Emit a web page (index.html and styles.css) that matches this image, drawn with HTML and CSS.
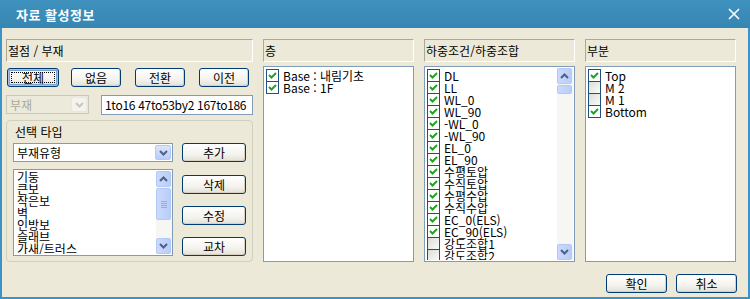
FILE: index.html
```html
<!DOCTYPE html>
<html lang="ko">
<head>
  <meta charset="UTF-8">
  <title>자료 활성정보</title>
  <link rel="stylesheet" href="styles.css">
</head>
<body>
  <div class="window">
    <div class="titlebar">
      <span class="title">자료 활성정보</span>
      <svg class="close" width="12" height="12" viewBox="0 0 12 12">
        <path d="M1 1 L11 11 M11 1 L1 11" stroke="#fff" stroke-width="1.6" fill="none"/>
      </svg>
    </div>
    <div class="frame">
      <div class="columns">
        <!-- 절점 / 부재 -->
        <section class="col">
          <div class="caption">절점 / 부재</div>
          <div class="btn-row">
            <button class="btn default">전체</button>
            <button class="btn">없음</button>
            <button class="btn">전환</button>
            <button class="btn">이전</button>
          </div>
          <div class="filter-row">
            <div class="combo disabled">
              <span class="combo-text">부재</span>
              <span class="drop">
                <svg width="9" height="6" viewBox="0 0 9 6"><path d="M1 1 L4.5 4.5 L8 1" stroke="#c9c7ba" stroke-width="2" fill="none"/></svg>
              </span>
            </div>
            <div class="textbox">1to16 47to53by2 167to186</div>
          </div>
          <div class="group">
            <div class="group-label">선택 타입</div>
            <div class="group-grid">
              <div class="combo">
                <span class="combo-text">부재유형</span>
                <span class="drop">
                  <svg width="9" height="6" viewBox="0 0 9 6"><path d="M1 1 L4.5 4.5 L8 1" stroke="#4d6185" stroke-width="2" fill="none"/></svg>
                </span>
              </div>
              <button class="btn">추가</button>
              <div class="listbox">
                <div class="items plain">
                  <div class="item">기둥</div>
                  <div class="item">큰보</div>
                  <div class="item">작은보</div>
                  <div class="item">벽</div>
                  <div class="item">인방보</div>
                  <div class="item">슬래브</div>
                  <div class="item">가새/트러스</div>
                </div>
                <div class="scrollbar">
                  <span class="sb-btn"><svg width="9" height="6" viewBox="0 0 9 6"><path d="M1 5 L4.5 1.5 L8 5" stroke="#4d6185" stroke-width="2" fill="none"/></svg></span>
                  <span class="sb-thumb tall"><i></i><i></i><i></i><i></i></span>
                  <span class="sb-track"></span>
                  <span class="sb-btn"><svg width="9" height="6" viewBox="0 0 9 6"><path d="M1 1 L4.5 4.5 L8 1" stroke="#4d6185" stroke-width="2" fill="none"/></svg></span>
                </div>
              </div>
              <div class="btn-stack">
                <button class="btn">삭제</button>
                <button class="btn">수정</button>
                <button class="btn">교차</button>
              </div>
            </div>
          </div>
        </section>

        <!-- 층 -->
        <section class="col">
          <div class="caption">층</div>
          <div class="list">
            <div class="items">
              <div class="check-item"><span class="box on"></span>Base : 내림기초</div>
              <div class="check-item"><span class="box on"></span>Base : 1F</div>
            </div>
          </div>
        </section>

        <!-- 하중조건/하중조합 -->
        <section class="col">
          <div class="caption">하중조건/하중조합</div>
          <div class="list">
            <div class="items">
              <div class="check-item"><span class="box on"></span>DL</div>
              <div class="check-item"><span class="box on"></span>LL</div>
              <div class="check-item"><span class="box on"></span>WL_0</div>
              <div class="check-item"><span class="box on"></span>WL_90</div>
              <div class="check-item"><span class="box on"></span>-WL_0</div>
              <div class="check-item"><span class="box on"></span>-WL_90</div>
              <div class="check-item"><span class="box on"></span>EL_0</div>
              <div class="check-item"><span class="box on"></span>EL_90</div>
              <div class="check-item"><span class="box on"></span>수평토압</div>
              <div class="check-item"><span class="box on"></span>수직토압</div>
              <div class="check-item"><span class="box on"></span>수평수압</div>
              <div class="check-item"><span class="box on"></span>수직수압</div>
              <div class="check-item"><span class="box on"></span>EC_0(ELS)</div>
              <div class="check-item"><span class="box on"></span>EC_90(ELS)</div>
              <div class="check-item"><span class="box"></span>강도조합1</div>
              <div class="check-item"><span class="box"></span>강도조합2</div>
              <div class="check-item"><span class="box"></span>강도조합3</div>
            </div>
            <div class="scrollbar">
              <span class="sb-btn"><svg width="9" height="6" viewBox="0 0 9 6"><path d="M1 5 L4.5 1.5 L8 5" stroke="#4d6185" stroke-width="2" fill="none"/></svg></span>
              <span class="sb-thumb"></span>
              <span class="sb-track"></span>
              <span class="sb-btn"><svg width="9" height="6" viewBox="0 0 9 6"><path d="M1 1 L4.5 4.5 L8 1" stroke="#4d6185" stroke-width="2" fill="none"/></svg></span>
            </div>
          </div>
        </section>

        <!-- 부분 -->
        <section class="col">
          <div class="caption">부분</div>
          <div class="list">
            <div class="items">
              <div class="check-item"><span class="box on"></span>Top</div>
              <div class="check-item"><span class="box"></span>M 2</div>
              <div class="check-item"><span class="box"></span>M 1</div>
              <div class="check-item"><span class="box on"></span>Bottom</div>
            </div>
          </div>
        </section>
      </div>

      <div class="footer">
        <button class="btn wide">확인</button>
        <button class="btn wide">취소</button>
      </div>
    </div>
  </div>
</body>
</html>
```

FILE: styles.css
```css
* { box-sizing: border-box; }
body {
  margin: 0;
  font-family: "Noto Sans CJK KR", "Noto Sans", sans-serif;
  font-size: 12px;
  color: #000;
}
.window {
  width: 750px;
  height: 299px;
  display: flex;
  flex-direction: column;
  background: #ece9d8;
}
.titlebar {
  height: 28px;
  display: flex;
  align-items: center;
  justify-content: space-between;
  padding: 0 10px 0 16px;
  background: linear-gradient(#3f91be, #3686b3);
  color: #fff;
  font-size: 13px;
  font-weight: bold;
  letter-spacing: 0.5px;
}
.frame {
  flex: 1;
  border: 2px solid #3b93c9;
  border-top: 0;
  padding: 11px 12px 0 4px;
}
.columns {
  display: grid;
  grid-template-columns: 247px 151px 151px 151px;
  column-gap: 10px;
}
.col { display: flex; flex-direction: column; }
.caption {
  height: 23px;
  line-height: 21px;
  padding-left: 1px;
  border: 1px solid;
  border-color: #aca899 #fff #fff #aca899;
}

/* buttons */
.btn {
  position: relative;
  height: 19px;
  padding: 0;
  font: inherit;
  line-height: 17px;
  color: #000;
  border: 1px solid #003c74;
  border-radius: 3px;
  background: linear-gradient(#ffffff, #f4f3ee 60%, #e3e1d6);
  box-shadow: inset -1px -1px 0 #d6d0c5;
}
.btn.default {
  box-shadow: inset 0 0 0 1px #a4c0ee, inset 0 0 0 2px #7da2ce;
}
.btn.default::after {
  content: "";
  position: absolute;
  left: 3px; top: 3px; right: 3px; bottom: 3px;
  border: 1px dotted #000;
}
.btn-row {
  display: flex;
  gap: 14px;
  margin-top: 6px;
  padding-left: 1px;
}
.btn-row .btn { width: 50px; }
.btn-row .btn.default { width: 52px; margin-right: -2px; }

.filter-row {
  display: flex;
  margin-top: 8px;
  height: 19px;
}
.combo {
  display: flex;
  align-items: center;
  height: 19px;
  background: #fff;
  border: 1px solid #7f9db9;
  padding: 1px;
}
.combo-text { flex: 1; padding-left: 2px; line-height: 15px; }
.combo.disabled {
  width: 83px;
  background: #ebeadb;
  border-color: #c9c7ba;
  color: #aca899;
}
.drop {
  width: 16px;
  height: 15px;
  display: flex;
  align-items: center;
  justify-content: center;
  border: 1px solid #b4c8f6;
  border-radius: 2px;
  background: linear-gradient(#dce6fd, #b9cdf9);
}
.combo.disabled .drop {
  border-color: #e8e7de;
  background: #f4f3ee;
}
.textbox {
  flex: 1;
  margin-left: 12px;
  height: 20px;
  line-height: 17px;
  padding-left: 3px;
  white-space: nowrap;
  overflow: hidden;
  letter-spacing: -0.3px;
  background: #fff;
  border: 1px solid #7f9db9;
}

/* group box */
.group {
  margin-top: 6px;
  height: 142px;
  border: 1px solid #d0d0bf;
  border-radius: 4px;
  padding: 4px 6px 0 6px;
}
.group-label { height: 14px; line-height: 14px; padding-left: 2px; margin-bottom: 4px; }
.group-grid {
  display: grid;
  grid-template-columns: 160px 64px;
  column-gap: 9px;
  row-gap: 7px;
}
.listbox {
  display: flex;
  height: 87px;
  background: #fff;
  border: 1px solid #7f9db9;
  padding: 1px 0 1px 1px;
}
.btn-stack {
  display: flex;
  flex-direction: column;
  gap: 12px;
  padding-top: 6px;
}

/* lists */
.list {
  display: flex;
  margin-top: 4px;
  height: 196px;
  background: #fff;
  border: 1px solid #7f9db9;
  padding: 1px;
}
.items { flex: 1; overflow: hidden; padding: 1px 0 0 1px; }
.items.plain { padding: 0 0 0 2px; }
.item { height: 12px; line-height: 12px; white-space: nowrap; }
.check-item {
  display: flex;
  align-items: flex-start;
  height: 12px;
  line-height: 13px;
  white-space: nowrap;
}
.box {
  flex: none;
  width: 13px;
  height: 13px;
  margin-right: 4px;
  border: 1px solid #1c5180;
  background: linear-gradient(135deg, #dcdcd7, #fbfbf9);
}
.box.on {
  background: #fff url("data:image/svg+xml;utf8,<svg xmlns='http://www.w3.org/2000/svg' width='11' height='11'><path d='M2 5 L4.5 7.5 L9 3' stroke='%2321a121' stroke-width='2' fill='none'/></svg>") no-repeat center;
}

/* scrollbars */
.scrollbar {
  width: 16px;
  flex: none;
  display: flex;
  flex-direction: column;
  background: #f6f6f2;
  padding-right: 1px;
}
.sb-btn, .sb-thumb {
  display: flex;
  align-items: center;
  justify-content: center;
  border: 1px solid #b4c8f6;
  border-radius: 2px;
  background: linear-gradient(90deg, #cbdafc, #b9cdf9);
}
.sb-btn { height: 16px; }
.sb-thumb { height: 9px; margin-top: 1px; flex-direction: column; gap: 1px; }
.sb-thumb.tall { height: 32px; }
.sb-thumb i { display: block; width: 6px; height: 1px; background: #8faaf0; }
.sb-track { flex: 1; }

.footer {
  display: flex;
  justify-content: flex-end;
  gap: 9px;
  margin-top: 12px;
  margin-right: -1px;
}
.btn.wide { width: 61px; }
```
